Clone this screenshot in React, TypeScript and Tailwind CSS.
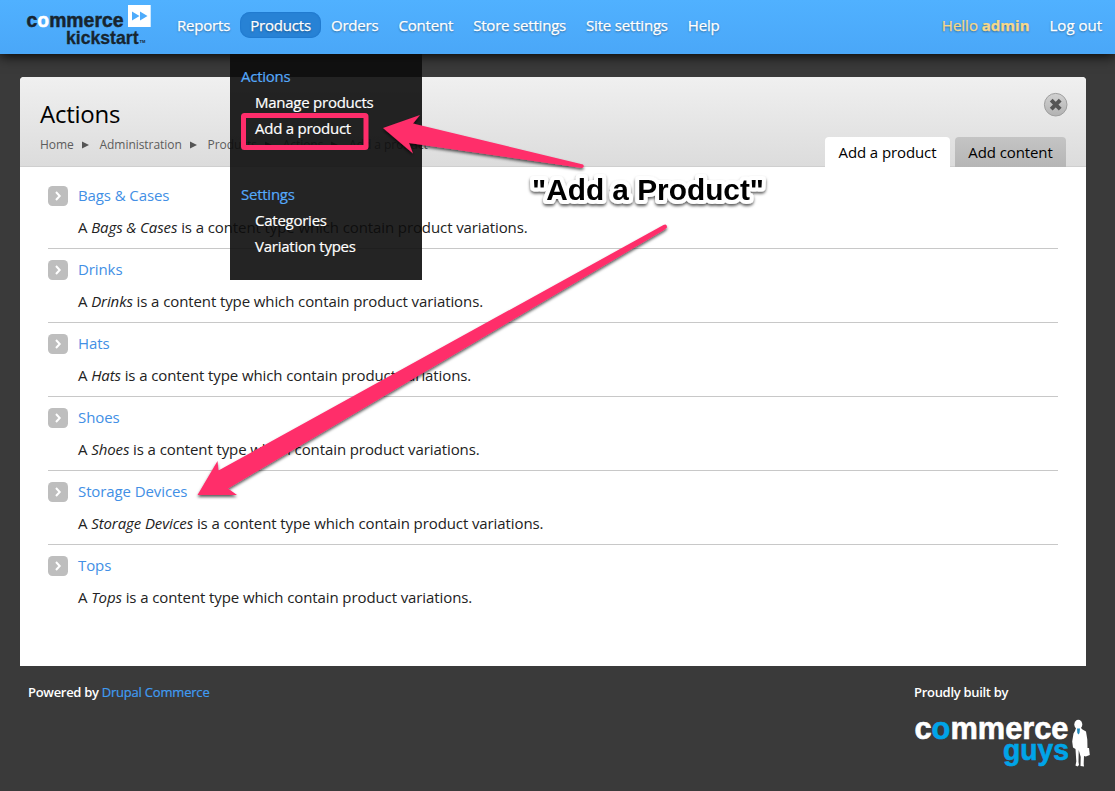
import React from "react";

const types = ["Bags & Cases", "Drinks", "Hats", "Shoes", "Storage Devices", "Tops"];
const nav = ["Reports", "Products", "Orders", "Content", "Store settings", "Site settings", "Help"];
const crumbs = ["Home", "Administration", "Products", "Actions", "Add a product"];

function KickstartLogo() {
  return (
    <svg width="130" height="50" viewBox="0 0 130 50" className="block shrink-0 overflow-visible" fontFamily="Liberation Sans, Arial, sans-serif" fontWeight="700">
      <text x="5.500" y="27" fontSize="20.500" textLength="97" lengthAdjust="spacingAndGlyphs" fill="#17252f" stroke="#17252f" strokeWidth="0.500">
        c<tspan fill="#fff" stroke="#fff">o</tspan>mmerce
      </text>
      <text x="45" y="43.500" fontSize="18.500" textLength="72.500" lengthAdjust="spacingAndGlyphs" fill="#17252f" stroke="#17252f" strokeWidth="0.300">kickstart</text>
      <text x="118.500" y="43" fontSize="4" fill="#17252f">TM</text>
      <rect x="107" y="5" width="22.700" height="22" fill="#fff" />
      <path d="M111 11.500l7.500 4.500-7.500 4.500zM119 11.500l7.500 4.500-7.500 4.500z" fill="#4dabfb" />
    </svg>
  );
}

function GuysLogo() {
  return (
    <svg width="180" height="56" viewBox="0 0 180 56" className="block overflow-visible" fontFamily="Liberation Sans, Arial, sans-serif" fontWeight="700">
      <text x="0.500" y="24.500" fontSize="30.500" textLength="154" lengthAdjust="spacingAndGlyphs" fill="#fff" stroke="#fff" strokeWidth="0.600">
        c<tspan fill="#00a4e8" stroke="#00a4e8">o</tspan>mmerce
      </text>
      <text x="89" y="45.500" fontSize="29.500" textLength="66" lengthAdjust="spacingAndGlyphs" fill="#00a4e8" stroke="#00a4e8" strokeWidth="0.600">guys</text>
      <ellipse cx="164.300" cy="10.500" rx="4" ry="4.700" fill="#fff" />
      <path d="M162 14h5l1.500 1.500 3.500 2 1.300 8 .2 8.500h1.500l.8 7-4 1.500-1.800-.5-.3 8 .3 2.500-3.500-.5.2-9-2-7-.2 12 .5 3-1.500 1.500-2-1 .8-4-.8-12.500-2.500-1.500-.8-6 1.300-8 1.500-2.500z" fill="#fff" />
      <path d="M163 14.500h3l-.5 4.500-1 1.500-1.200-1.500z" fill="#2089bd" />
    </svg>
  );
}

function DropdownMenu() {
  return (
    <div className="absolute left-[230px] top-[54px] z-10 h-[226px] w-[192px] bg-[rgba(12,12,12,0.9)] text-[15px] leading-[26px] tracking-[-0.25px] text-white [-webkit-text-stroke:0.2px]">
      <div className="pl-[11px] pt-[9px]">
        <div className="text-[#55a9fa]">Actions</div>
        <div className="pl-[14px]">Manage products</div>
        <div className="pl-[14px]">Add a product</div>
        <div className="mt-10 text-[#55a9fa]">Settings</div>
        <div className="pl-[14px]">Categories</div>
        <div className="pl-[14px]">Variation types</div>
      </div>
    </div>
  );
}

function Annotations() {
  return (
    <svg width="1115" height="791" viewBox="0 0 1115 791" className="pointer-events-none absolute left-0 top-0 z-20">
      <defs>
        <filter id="shade" x="-10%" y="-10%" width="120%" height="130%">
          <feDropShadow dx="0" dy="2" stdDeviation="1.700" floodColor="#000" floodOpacity="0.65" />
        </filter>
      </defs>
      <rect x="243.500" y="115.500" width="122.500" height="32" rx="1" fill="none" stroke="#ff2d6b" strokeWidth="5" />
      <g fill="#ff2d6b" filter="url(#shade)">
        <path d="M383 128L420 115 413 123.500 583 164.500Q585 167 582 168L409 143 413 153.500Z" />
        <path d="M197.500 495L217.500 461 218.500 470.500 663.500 225Q667 223.500 667 227.500L664 230 228 488.500 237 495Z" />
      </g>
      <text x="532" y="200" fontFamily="Liberation Sans, Arial, sans-serif" fontWeight="700" fontSize="30" textLength="232" lengthAdjust="spacingAndGlyphs" fill="#000" stroke="#fff" strokeWidth="8" strokeLinejoin="round" paintOrder="stroke" filter="url(#shade)">"Add a Product"</text>
    </svg>
  );
}

export default function App() {
  return (
    <div className="relative h-[791px] w-[1115px] overflow-hidden bg-[#3a3a3a] font-['Open_Sans',sans-serif]">
      <header className="relative flex h-[54px] items-start bg-linear-to-b from-[#50b1ff] to-[#4aa7f8] pl-[21px] text-[15px] font-medium text-white shadow-[0_2px_12px_rgba(0,0,0,0.9)] [-webkit-text-stroke:0.25px]">
        <KickstartLogo />
        <nav className="ml-4 flex h-[26px] pt-3 leading-[26px] tracking-[-0.19px] [text-shadow:0_1px_2px_rgba(0,0,0,0.4)]">
          {nav.map((n) => (
            <a key={n} className={"h-[26px] whitespace-nowrap px-[10px] " + (n === "Products" ? "rounded-[10px] bg-[#2782d5] shadow-[inset_0_0_1px_1px_#217bd0]" : "")}>{n}</a>
          ))}
        </nav>
        <div className="ml-auto flex gap-5 pr-[13px] pt-3 leading-[26px] [text-shadow:0_1px_2px_rgba(0,0,0,0.4)]">
          <span className="text-[#f6d88a]">Hello <b>admin</b></span>
          <a>Log out</a>
        </div>
      </header>

      <main className="relative ml-5 mt-[23px] h-[589px] w-[1066px] overflow-hidden rounded-t-[4px] bg-white">
        <div className="flex h-[90px] justify-between border-b border-[#cfcfcf] bg-linear-to-b from-[#f0f0f0] to-[#dcdcdc] pl-5 pr-5">
          <div>
            <h1 className="mt-[20px] text-[24px] leading-[34px] tracking-[-0.25px] text-black">Actions</h1>
            <div className="mt-[5px] flex text-[12px] leading-[18px] tracking-[-0.05px] text-[#5c5c5c]">
              {crumbs.map((c, i) => (
                <span key={c} className="flex items-center whitespace-nowrap">
                  {c}
                  {i < crumbs.length - 1 && (
                    <svg width="7" height="8" viewBox="0 0 7 8" className="ml-2 mr-[10.800px]"><path d="M0 .5l7 3.500-7 3.500z" fill="#555" /></svg>
                  )}
                </span>
              ))}
            </div>
          </div>
          <div className="flex flex-col items-end justify-between pt-[15px]">
            <svg width="26" height="26" viewBox="0 0 26 26" className="-mr-[2px]">
              <defs><linearGradient id="cl" x2="0" y2="1"><stop stopColor="#d2d2d2" /><stop offset="1" stopColor="#b2b2b2" /></linearGradient></defs>
              <circle cx="13.700" cy="12.700" r="11.300" fill="url(#cl)" stroke="#9f9f9f" />
              <path d="M9.200 8.200l9 9M18.200 8.200l-9 9" stroke="#555" strokeWidth="4" />
            </svg>
            <div className="-mb-px flex gap-[5px] text-[15px] leading-[31px] tracking-[-0.1px] text-black">
              <div className="h-[30px] w-[125px] rounded-t-[4px] bg-white text-center">Add a product</div>
              <div className="h-[30px] w-[111px] rounded-t-[4px] bg-linear-to-b from-[#c4c4c4] to-[#b5b5b5] text-center">Add content</div>
            </div>
          </div>
        </div>
        <ul className="ml-7 w-[1010px]">
          {types.map((t) => (
            <li key={t} className="flex h-[74px] gap-[10px] border-b border-[#c8c8c8] pt-[11px] first:h-[82px] first:pt-[19px] last:border-0">
              <svg width="20" height="20" viewBox="0 0 20 20" className="shrink-0"><rect width="20" height="20" rx="4.500" fill="#bebebe" /><path d="M8 6l3.700 4-3.700 4" fill="none" stroke="#fff" strokeWidth="2" /></svg>
              <div className="-mt-px text-[15px] leading-5 tracking-[-0.1px]">
                <a className="block text-[#428fe5]">{t}</a>
                <p className="mt-3 text-[#222]">A <i>{t}</i> is a content type which contain product variations.</p>
              </div>
            </li>
          ))}
        </ul>
      </main>

      <footer className="flex justify-between pl-7 pr-[21px] pt-4 text-[13px] font-semibold leading-5 tracking-[-0.3px] text-white">
        <div>Powered by <a className="font-medium tracking-[-0.2px] text-[#409cf2] [-webkit-text-stroke:0.2px]">Drupal Commerce</a></div>
        <div className="w-[180px]">
          Proudly built by
          <div className="mt-3 tracking-normal"><GuysLogo /></div>
        </div>
      </footer>
      <DropdownMenu />
      <Annotations />
    </div>
  );
}
